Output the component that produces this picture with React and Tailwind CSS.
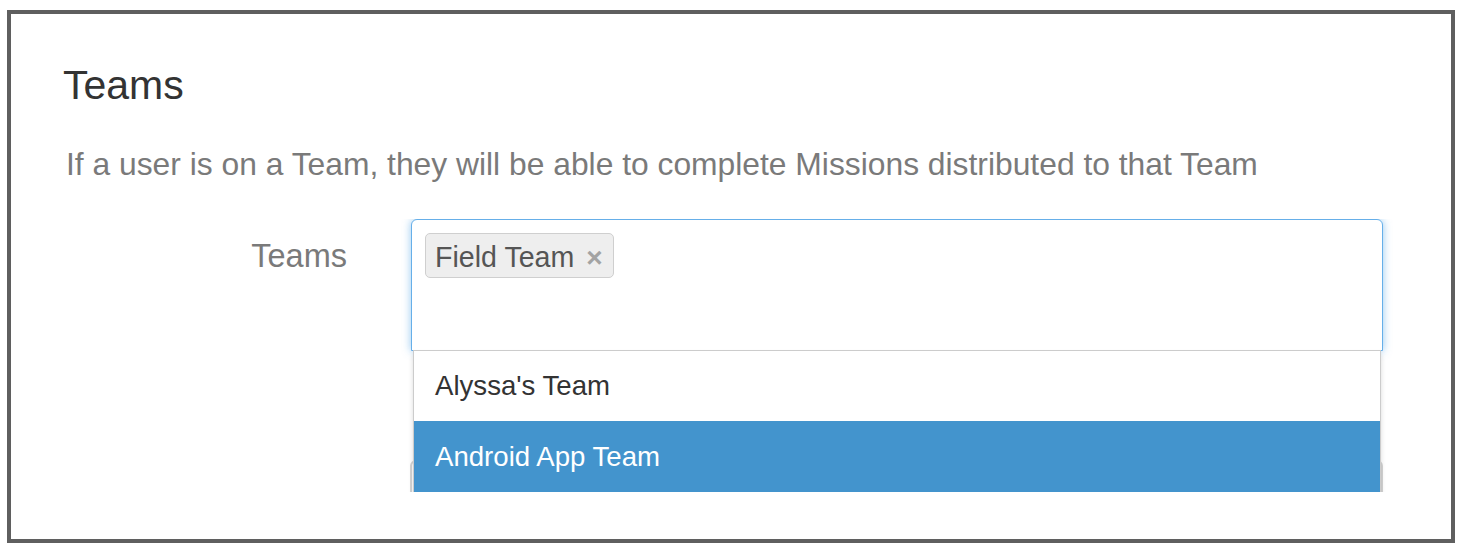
export default function App() {
  return (
    <div className="min-h-[550px] bg-white font-['Liberation_Sans',Arial,sans-serif]">
      <div className="ml-[7px] mt-[10px] h-[533px] w-[1448px] border-4 border-[#5f5f5f] bg-white pl-[52px] pt-[49px]">
        <h2 className="text-[41px] font-normal leading-[44px] text-[#333]">Teams</h2>
        <p className="ml-[3px] mt-[35px] text-[31.8px] leading-[45px] text-[#7a7a7a]">
          If a user is on a Team, they will be able to complete Missions distributed to that Team
        </p>

        <div className="-ml-[52px] mt-[32px] h-[273px] overflow-hidden">
          <div className="flex">
            <label className="mt-[15px] w-[336px] text-right text-[32.5px] leading-[45px] text-[#7a7a7a]">Teams</label>
            <div className="relative ml-[64px] w-[972px]">
              <div className="h-[132px] rounded-t-[6px] border border-[#66afe9] bg-white px-[13px] pt-[13px] shadow-[0_0_8px_rgba(102,175,233,0.7)]">
                <span className="inline-flex h-[45px] items-center rounded-[5px] border border-[#cfcfcf] bg-[#eeeeee] pl-[9px] pr-[10px] pt-[4px] text-[28.6px] text-[#555]">
                  Field Team
                  <span className="ml-[12px] text-[28px] font-bold text-[#a3a3a3]">×</span>
                </span>
              </div>
              <div className="absolute left-[2px] top-[131px] z-10 w-[968px] border-x border-t border-[#cccccc] bg-white shadow-[0_4px_5px_rgba(0,0,0,0.15)]">
                <div className="flex h-[70px] items-center pl-[21px] text-[27.6px] text-[#333]">Alyssa's Team</div>
                <div className="flex h-[71px] items-center bg-[#4394cd] pl-[21px] text-[27.6px] text-white">Android App Team</div>
              </div>
            </div>
          </div>
          <div className="ml-[399px] mt-[109px] h-[60px] w-[973px] rounded-[6px] border-2 border-[#d4d4d4] bg-white" />
        </div>
      </div>
    </div>
  )
}
